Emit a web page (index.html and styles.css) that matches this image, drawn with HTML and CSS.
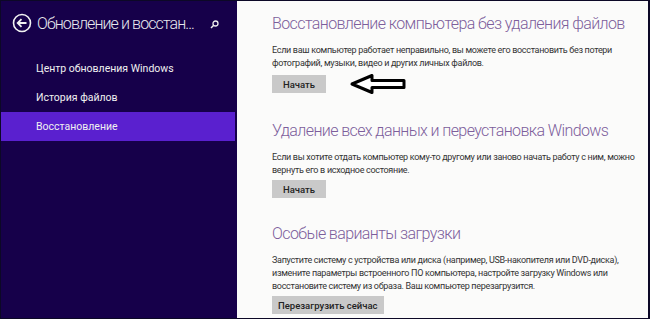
FILE: index.html
```html
<!DOCTYPE html>
<html lang="ru">
<head>
    <meta charset="UTF-8">
    <title>Обновление и восстановление</title>
    <link rel="stylesheet" href="styles.css">
</head>
<body>
    <div class="window">
        <div class="sidebar">
            <div class="header">
                <svg class="back" width="20" height="20" viewBox="0 0 20 20">
                    <circle cx="10" cy="10" r="8.5" fill="none" stroke="#f2f2f2" stroke-width="1.6"/>
                    <path d="M14.5 10H6M9.5 6.2L5.7 10l3.8 3.8" fill="none" stroke="#f2f2f2" stroke-width="1.8"/>
                </svg>
                <span class="title">Обновление и восстан...</span>
                <svg class="search" width="9" height="9" viewBox="0 0 9 9">
                    <circle cx="5.5" cy="3.5" r="2.5" fill="none" stroke="#eee" stroke-width="1.3"/>
                    <path d="M3.7 5.3L1 8" stroke="#eee" stroke-width="1.5"/>
                </svg>
            </div>
            <ul class="nav">
                <li>Центр обновления Windows</li>
                <li>История файлов</li>
                <li class="active">Восстановление</li>
            </ul>
        </div>
        <div class="main">
            <div class="section">
                <h2>Восстановление компьютера без удаления файлов</h2>
                <p>Если ваш компьютер работает неправильно, вы можете его восстановить без потери фотографий, музыки, видео и других личных файлов.</p>
                <div class="row">
                    <button class="btn">Начать</button>
                    <!-- arrow drawn over the screenshot -->
                    <svg class="arrow" width="58" height="22" viewBox="0 0 58 22">
                        <path d="M3 11L23 2.5V7.5H55V14.5H23V19.5Z" fill="#fff" stroke="#000" stroke-width="3" stroke-linejoin="round"/>
                    </svg>
                </div>
            </div>
            <div class="section">
                <h2>Удаление всех данных и переустановка Windows</h2>
                <p>Если вы хотите отдать компьютер кому-то другому или заново начать работу с ним, можно вернуть его в исходное состояние.</p>
                <button class="btn">Начать</button>
            </div>
            <div class="section">
                <h2>Особые варианты загрузки</h2>
                <p>Запустите систему с устройства или диска (например, USB-накопителя или DVD-диска), измените параметры встроенного ПО компьютера, настройте загрузку Windows или восстановите систему из образа. Ваш компьютер перезагрузится.</p>
                <button class="btn">Перезагрузить сейчас</button>
            </div>
        </div>
    </div>
</body>
</html>
```

FILE: styles.css
```css
body {
    margin: 0;
    font-family: Roboto, "Noto Sans", sans-serif;
    background: #0c0826;
}
.window {
    display: flex;
    width: 647px;
    height: 317px;
    border-top: 1px solid #0c0826;
    border-left: 1px solid #0c0826;
    overflow: hidden;
}
.sidebar {
    width: 236px;
    flex-shrink: 0;
    background-color: #16004a;
    color: #f0f0f0;
}
.header {
    display: flex;
    align-items: center;
    padding: 11px 0 0 11px;
    height: 22px;
}
.back {
    flex-shrink: 0;
    margin-right: 5px;
}
.title {
    font-size: 16px;
    font-weight: 300;
    letter-spacing: -0.9px;
    color: #e8e8ee;
    white-space: nowrap;
}
.search {
    flex-shrink: 0;
    margin-left: 16px;
    margin-top: 2px;
}
.nav {
    list-style: none;
    margin: 20px 0 0 0;
    padding: 0;
}
.nav li {
    font-size: 10.5px;
    height: 29px;
    line-height: 29px;
    padding-left: 35px;
    margin-right: 2px;
}
.nav li.active {
    background-color: #5a20cf;
}
.main {
    flex: 1;
    background-color: #fbfbfa;
    padding: 11px 0 0 35px;
}
.section {
    margin-bottom: 24px;
}
h2 {
    margin: 0;
    font-size: 16px;
    font-weight: 300;
    letter-spacing: -0.6px;
    color: #7d5e9c;
    line-height: 24px;
    white-space: nowrap;
}
p {
    margin: 8px 0 3px;
    font-size: 9px;
    line-height: 13px;
    color: #333;
    width: 368px;
    letter-spacing: -0.3px;
}
.row {
    display: flex;
    align-items: center;
}
.btn {
    display: block;
    background: #c9c9c9;
    border: none;
    font-family: inherit;
    font-size: 9.5px;
    font-weight: 500;
    color: #222;
    height: 18px;
    padding: 0 6px;
    min-width: 54px;
}
.arrow {
    margin-left: 23px;
}
```
